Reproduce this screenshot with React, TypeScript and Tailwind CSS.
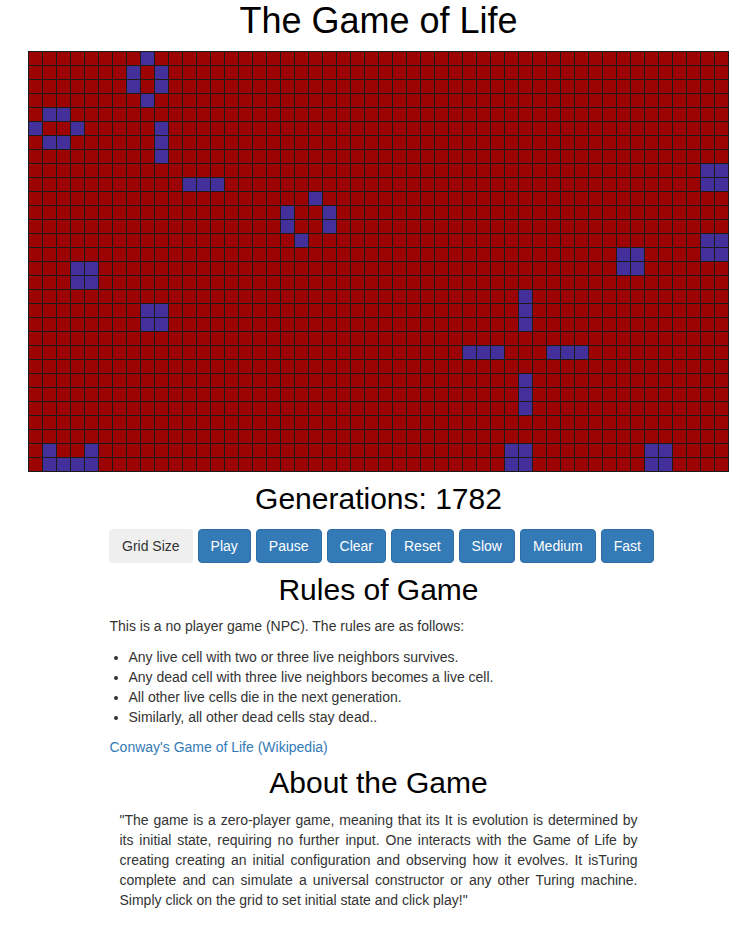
import React from 'react';

const COLS = 50;
const ROWS = 30;

// live cells, row -> columns
const liveCells: Record<number, number[]> = {
  0: [8],
  1: [7, 9],
  2: [7, 9],
  3: [8],
  4: [1, 2],
  5: [0, 3, 9],
  6: [1, 2, 9],
  7: [9],
  8: [48, 49],
  9: [11, 12, 13, 48, 49],
  10: [20],
  11: [18, 21],
  12: [18, 21],
  13: [19, 48, 49],
  14: [42, 43, 48, 49],
  15: [3, 4, 42, 43],
  16: [3, 4],
  17: [35],
  18: [8, 9, 35],
  19: [8, 9, 35],
  21: [31, 32, 33, 37, 38, 39],
  23: [35],
  24: [35],
  25: [35],
  28: [1, 4, 34, 35, 44, 45],
  29: [1, 2, 3, 4, 34, 35, 44, 45],
};

const buttons = ['Play', 'Pause', 'Clear', 'Reset', 'Slow', 'Medium', 'Fast'];

const rules = [
  'Any live cell with two or three live neighbors survives.',
  'Any dead cell with three live neighbors becomes a live cell.',
  'All other live cells die in the next generation.',
  'Similarly, all other dead cells stay dead..',
];

const Grid: React.FC = () => {
  const cells = [];
  for (let r = 0; r < ROWS; r++) {
    const alive = liveCells[r] || [];
    for (let c = 0; c < COLS; c++) {
      cells.push(
        <div
          key={`${r}-${c}`}
          className={alive.includes(c) ? 'w-[13px] h-[13px] bg-[#44309b]' : 'w-[13px] h-[13px] bg-[#9c0303]'}
        />
      );
    }
  }
  return (
    <div className="grid grid-cols-[repeat(50,13px)] gap-px p-px bg-[#1a1a1a] mt-[10px]">
      {cells}
    </div>
  );
};

const App: React.FC = () => {
  return (
    <div className="min-h-[943px] bg-white pl-[7px] text-[14px] leading-[20px] text-[#333] font-['Liberation_Sans',Arial,sans-serif]">
      <div className="flex flex-col items-center">
        <h1 className="text-[36px] leading-[40px] text-black mt-[1px]">The Game of Life</h1>

        <Grid />

        <h2 className="text-[30px] leading-[33px] text-black mt-[10px]">Generations: 1782</h2>

        <div className="flex gap-[5px] mt-[14px] pl-[6px]">
          <button className="px-[13px] py-[7px] rounded-[4px] bg-[#efefef] text-[#333]">Grid Size</button>
          {buttons.map((b) => (
            <button
              key={b}
              className="px-3 py-[6px] rounded-[4px] border border-[#2e6da4] bg-[#337ab7] text-white"
            >
              {b}
            </button>
          ))}
        </div>

        <h2 className="text-[30px] leading-[33px] text-black mt-[10px]">Rules of Game</h2>

        <div className="w-[538px] mt-[10px]">
          <p className="mb-[11px]">This is a no player game (NPC). The rules are as follows:</p>
          <ul className="list-disc pl-[19px] mb-[10px]">
            {rules.map((r) => (
              <li key={r}>{r}</li>
            ))}
          </ul>
          <p>
            <a className="text-[#337ab7]">Conway's Game of Life (Wikipedia)</a>
          </p>
        </div>

        <h2 className="text-[30px] leading-[33px] text-black mt-[9px]">About the Game</h2>

        <p className="w-[518px] mt-[11px] text-justify">
          "The game is a zero-player game, meaning that its It is evolution is determined by its initial state,
          requiring no further input. One interacts with the Game of Life by creating creating an initial
          configuration and observing how it evolves. It isTuring complete and can simulate a universal
          constructor or any other Turing machine. Simply click on the grid to set initial state and click play!"
        </p>
      </div>
    </div>
  );
};

export default App;
